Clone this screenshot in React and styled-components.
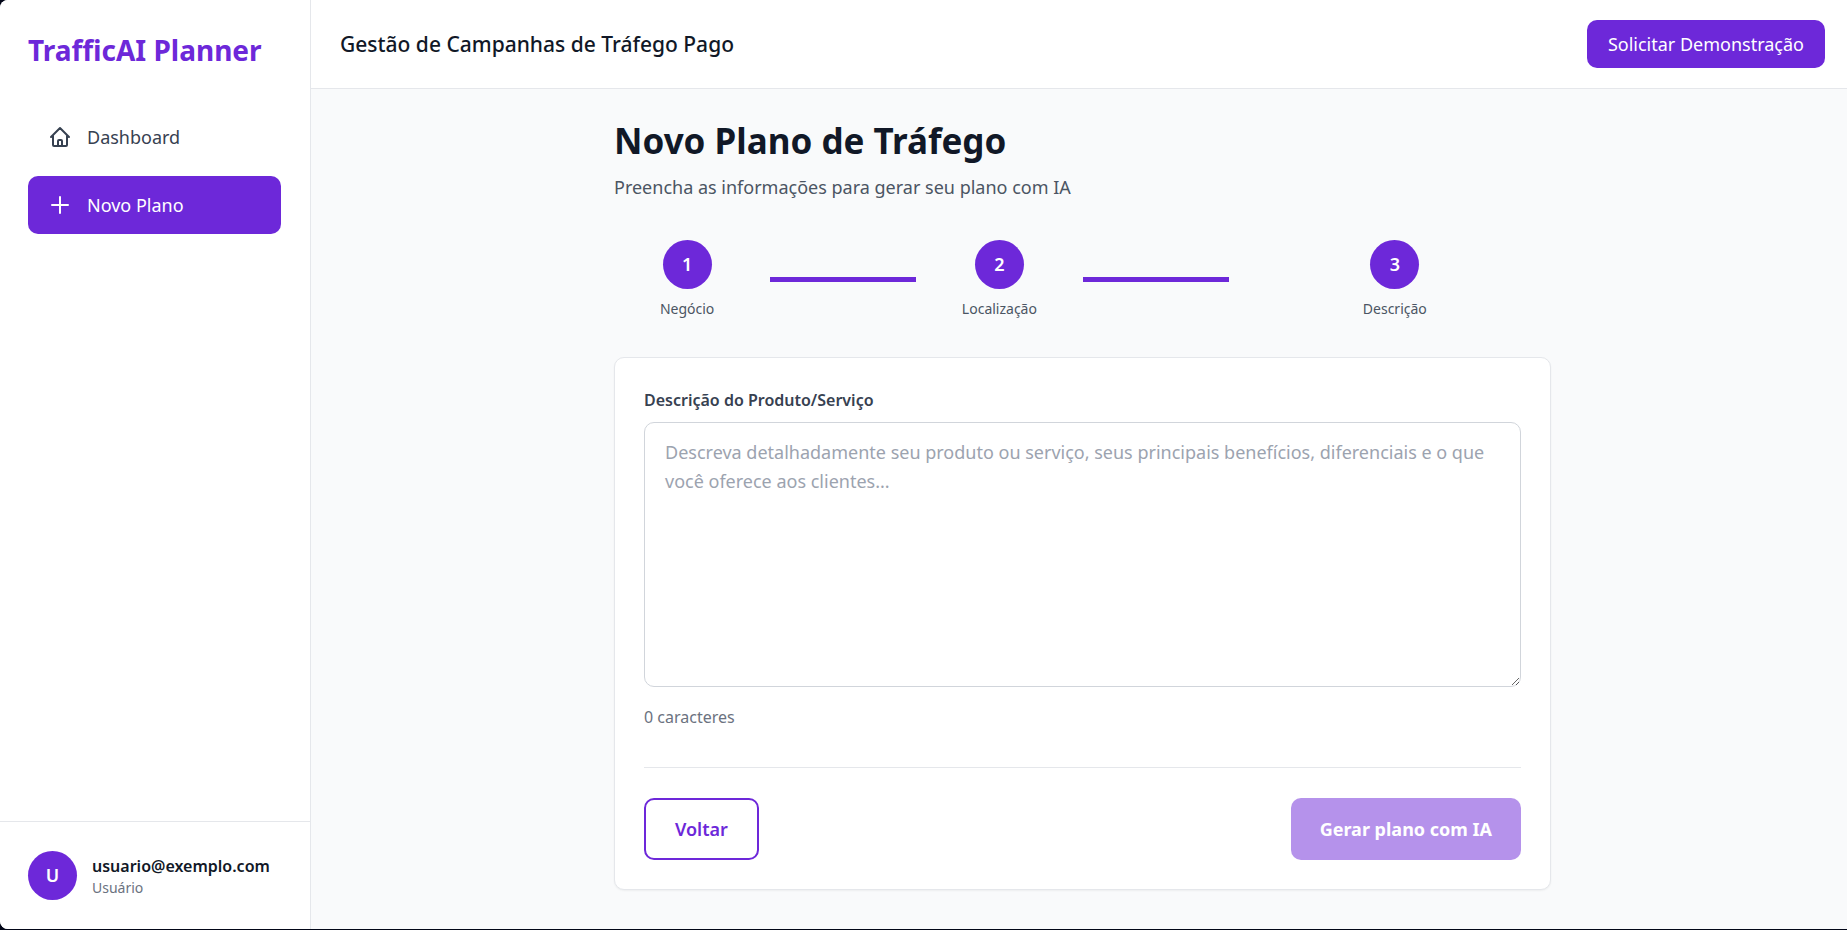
import React, { useState } from "react";
import styled, { createGlobalStyle } from "styled-components";

const steps = ["Negócio", "Localização", "Descrição"];

function HomeIcon() {
  return (
    <StIcon viewBox="0 0 24 24" aria-hidden="true">
      <path d="M3 12l2-2m0 0l7-7 7 7M5 10v10a1 1 0 001 1h3m10-11l2 2m-2-2v10a1 1 0 01-1 1h-3m-6 0a1 1 0 001-1v-4a1 1 0 011-1h2a1 1 0 011 1v4a1 1 0 001 1m-6 0h6" />
    </StIcon>
  );
}

function PlusIcon() {
  return (
    <StIcon viewBox="0 0 24 24" aria-hidden="true">
      <path d="M12 4v16m8-8H4" />
    </StIcon>
  );
}

function Sidebar() {
  return (
    <StSidebar>
      <StLogo>TrafficAI Planner</StLogo>
      <StNav>
        <StNavLink href="#dashboard">
          <HomeIcon />
          Dashboard
        </StNavLink>
        <StNavLink href="#novo-plano" $active aria-current="page">
          <PlusIcon />
          Novo Plano
        </StNavLink>
      </StNav>
      <StUserBox>
        <StCircle>U</StCircle>
        <div>
          <StEmail>usuario@exemplo.com</StEmail>
          <StRole>Usuário</StRole>
        </div>
      </StUserBox>
    </StSidebar>
  );
}

function Stepper() {
  return (
    <StStepper>
      {steps.map((label, index) => (
        <StStep key={label}>
          <StStepInfo>
            <StCircle>{index + 1}</StCircle>
            <StStepLabel>{label}</StStepLabel>
          </StStepInfo>
          {index < steps.length - 1 && <StStepLine />}
        </StStep>
      ))}
    </StStepper>
  );
}

function PlanForm() {
  const [description, setDescription] = useState("");

  return (
    <StCard onSubmit={(e) => e.preventDefault()}>
      <StLabel htmlFor="description">Descrição do Produto/Serviço</StLabel>
      <StTextarea
        id="description"
        name="description"
        value={description}
        onChange={(e) => setDescription(e.target.value)}
        placeholder="Descreva detalhadamente seu produto ou serviço, seus principais benefícios, diferenciais e o que você oferece aos clientes..."
      />
      <StCounter>{description.length} caracteres</StCounter>
      <StActions>
        <StBackBtn type="button">Voltar</StBackBtn>
        <StSubmitBtn type="submit" disabled={!description}>
          Gerar plano com IA
        </StSubmitBtn>
      </StActions>
    </StCard>
  );
}

function App() {
  return (
    <>
      <GlobalStyle />
      <StLayout>
        <Sidebar />
        <StContent>
          <StHeader>
            <StHeaderTitle>Gestão de Campanhas de Tráfego Pago</StHeaderTitle>
            <StDemoBtn type="button">Solicitar Demonstração</StDemoBtn>
          </StHeader>
          <StMain>
            <StPage>
              <StTitle>Novo Plano de Tráfego</StTitle>
              <StSubtitle>
                Preencha as informações para gerar seu plano com IA
              </StSubtitle>
              <Stepper />
              <PlanForm />
            </StPage>
          </StMain>
        </StContent>
      </StLayout>
    </>
  );
}

export default App;

const GlobalStyle = createGlobalStyle`
  * {
    box-sizing: border-box;
  }

  body {
    margin: 0;
    background-color: #020617;
    color: #111827;
    font-family: "Segoe UI", "Noto Sans", "Open Sans", sans-serif;
    font-size: 18px;
    line-height: 29px;
  }

  h1, h2, p {
    margin: 0;
  }

  button, textarea {
    font: inherit;
  }
`;

const StLayout = styled.div`
  display: flex;
  min-height: calc(100vh - 1px);

  background-color: #f9fafb;
  border-radius: 8px 0 0 8px;
  overflow: hidden;
`;

const StSidebar = styled.aside`
  display: flex;
  flex-direction: column;
  flex-shrink: 0;
  width: 311px;

  background-color: white;
  border-right: 1px solid #e5e7eb;
`;

const StLogo = styled.h1`
  padding: 32px 28px;

  color: #6d28d9;
  font-size: 28px;
  font-weight: 700;
  line-height: 36px;
`;

const StNav = styled.nav`
  display: flex;
  flex: 1;
  flex-direction: column;
  gap: 10px;
  padding: 8px 29px 8px 28px;
`;

const StNavLink = styled.a`
  display: flex;
  align-items: center;
  gap: 15px;
  height: 58px;
  padding: 0 20px;

  background-color: ${({ $active }) => ($active ? "#6d28d9" : "transparent")};
  color: ${({ $active }) => ($active ? "white" : "#374151")};
  border-radius: 10px;
  text-decoration: none;
`;

const StIcon = styled.svg`
  width: 24px;
  height: 24px;

  fill: none;
  stroke: currentColor;
  stroke-width: 2;
  stroke-linecap: round;
  stroke-linejoin: round;
`;

const StUserBox = styled.div`
  display: flex;
  align-items: center;
  gap: 15px;
  padding: 29px 28px;

  border-top: 1px solid #e5e7eb;
`;

const StCircle = styled.div`
  display: flex;
  align-items: center;
  justify-content: center;
  width: 49px;
  height: 49px;

  background-color: #6d28d9;
  color: white;
  border-radius: 50%;
  font-weight: 600;
`;

const StEmail = styled.p`
  font-size: 16px;
  font-weight: 600;
  line-height: 24px;
`;

const StRole = styled.p`
  color: #6b7280;
  font-size: 14px;
  line-height: 20px;
`;

const StContent = styled.div`
  display: flex;
  flex: 1;
  flex-direction: column;
  min-width: 0;
`;

const StHeader = styled.header`
  display: flex;
  align-items: center;
  justify-content: space-between;
  height: 89px;
  padding: 0 22px 0 29px;

  background-color: white;
  border-bottom: 1px solid #e5e7eb;
`;

const StHeaderTitle = styled.p`
  font-size: 21px;
  font-weight: 500;
  line-height: 29px;
`;

const StDemoBtn = styled.button`
  height: 48px;
  padding: 0 21px;

  background-color: #6d28d9;
  color: white;
  border: none;
  border-radius: 10px;
`;

const StMain = styled.main`
  flex: 1;
  padding: 30px 22px 38px 29px;
`;

const StPage = styled.div`
  max-width: 937px;
  margin: 0 auto;
`;

const StTitle = styled.h2`
  font-size: 35px;
  font-weight: 700;
  line-height: 44px;
`;

const StSubtitle = styled.p`
  margin-top: 10px;

  color: #4b5563;
`;

const StStepper = styled.div`
  display: flex;
  margin: 38px 0;
`;

const StStep = styled.div`
  display: flex;
  flex: 1;
  align-items: center;
`;

const StStepInfo = styled.div`
  display: flex;
  flex: 1;
  flex-direction: column;
  align-items: center;
  gap: 10px;
`;

const StStepLabel = styled.span`
  color: #4b5563;
  font-size: 14px;
  line-height: 20px;
`;

const StStepLine = styled.div`
  flex: 1;
  height: 5px;
  margin: 0 10px;

  background-color: #6d28d9;
`;

const StCard = styled.form`
  padding: 29px;

  background-color: white;
  border: 1px solid #e5e7eb;
  border-radius: 10px;
  box-shadow: 0 1px 2px rgba(0, 0, 0, 0.05);
`;

const StLabel = styled.label`
  display: block;
  margin-bottom: 8px;

  color: #374151;
  font-size: 16px;
  font-weight: 600;
  line-height: 27px;
`;

const StTextarea = styled.textarea`
  display: block;
  width: 100%;
  height: 265px;
  padding: 15px 20px;

  background-color: white;
  color: #111827;
  border: 1px solid #d1d5db;
  border-radius: 10px;
  resize: vertical;

  &::placeholder {
    color: #9ca3af;
  }
`;

const StCounter = styled.p`
  margin-top: 18px;

  color: #6b7280;
  font-size: 16px;
  line-height: 25px;
`;

const StActions = styled.div`
  display: flex;
  justify-content: space-between;
  margin-top: 37px;
  padding-top: 30px;

  border-top: 1px solid #e5e7eb;
`;

const StBackBtn = styled.button`
  height: 62px;
  padding: 0 29px;

  background-color: white;
  color: #6d28d9;
  border: 2px solid #6d28d9;
  border-radius: 10px;
  font-weight: 600;
`;

const StSubmitBtn = styled.button`
  height: 62px;
  padding: 0 29px;

  background-color: #6d28d9;
  color: white;
  border: none;
  border-radius: 10px;
  font-weight: 700;

  &:disabled {
    opacity: 0.5;
  }
`;
